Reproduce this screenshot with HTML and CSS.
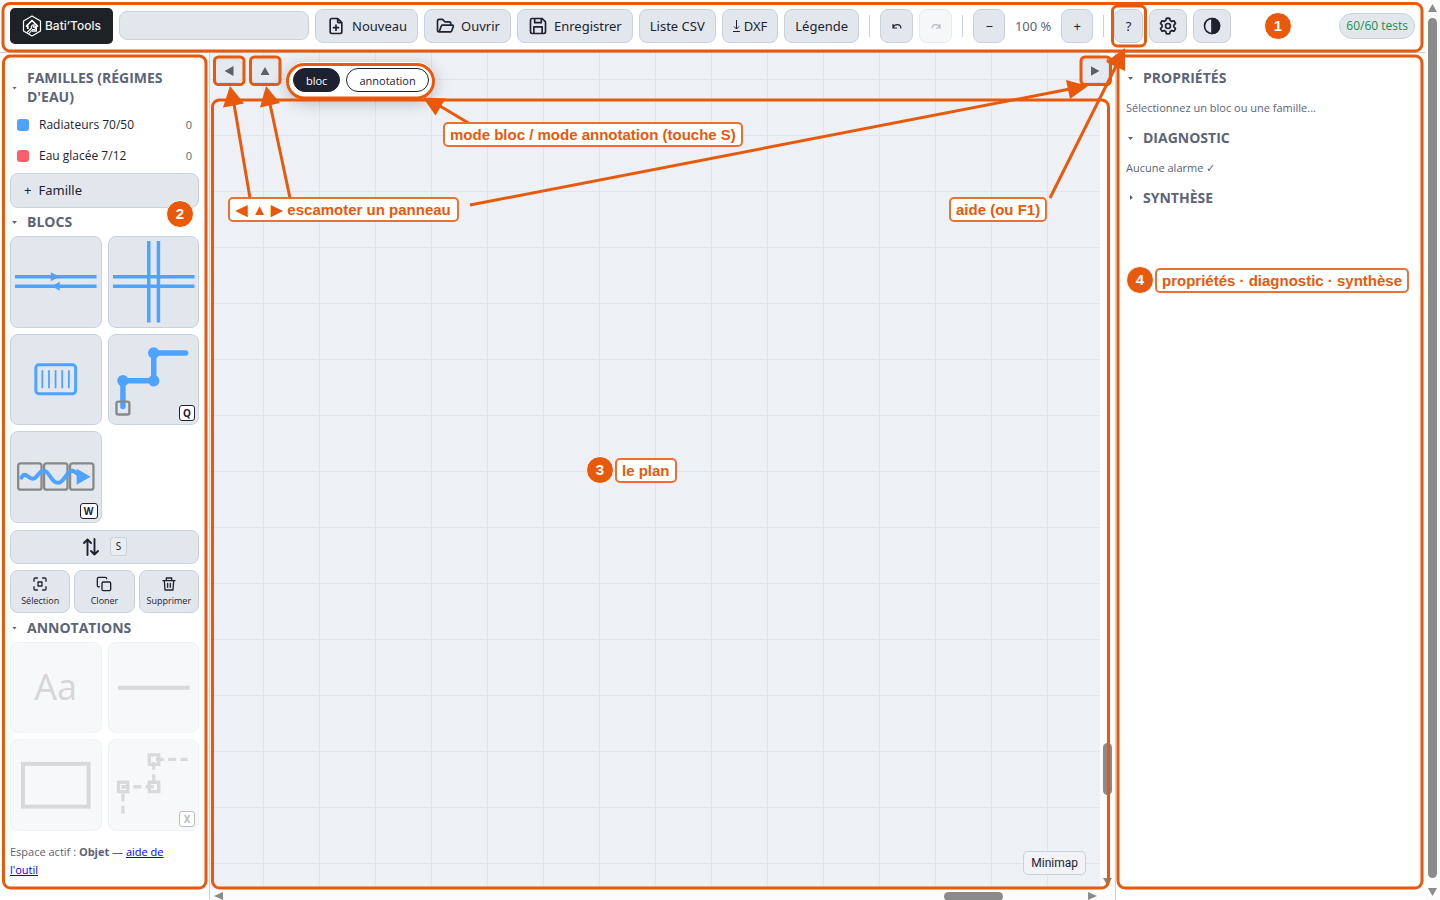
FILE: index.html
```html
<!DOCTYPE html>
<html lang="fr">
<head>
<meta charset="utf-8">
<title>Bati'Tools</title>
<link rel="stylesheet" href="styles.css">
</head>
<body>
<div class="page">
  <div class="app">
    <header class="topbar">
      <div class="logo">
        <svg width="20" height="22" viewBox="0 0 20 22" fill="none" stroke="#fff" stroke-width="1.2" stroke-linejoin="round"><path d="M10 1l8.500 5v10L10 21l-8.500-5V6z"/><path d="M4 11.500L10 5.500l6 6M5.800 10.500V14M14.200 10.500V16H10" stroke-width="1.700"/><path d="M5 17.500l4.500-4.500a2.300 2.300 0 0 1 3-3l-1.300 1.500 1 1 1.500-1.200a2.300 2.300 0 0 1-3 3L6.500 19" stroke-width="1.100"/></svg>
        <span>Bati’Tools</span>
      </div>
      <input class="project" type="text" aria-label="Nom du projet">
      <button class="btn wide"><svg class="ic" viewBox="0 0 24 24"><path d="M14 3v4a1 1 0 0 0 1 1h4M17 21H7a2 2 0 0 1-2-2V5a2 2 0 0 1 2-2h7l5 5v11a2 2 0 0 1-2 2zM12 11v6M9 14h6"/></svg>Nouveau</button>
      <button class="btn wide"><svg class="ic" viewBox="0 0 24 24"><path d="M5 19l2.800-7.500a1 1 0 0 1 .9-.5H21a1 1 0 0 1 1 1.300l-2 5.700a1.500 1.500 0 0 1-1.400 1zM5 19a2 2 0 0 1-2-2V6a2 2 0 0 1 2-2h4l3 3h5a2 2 0 0 1 2 2v2"/></svg>Ouvrir</button>
      <button class="btn wide"><svg class="ic" viewBox="0 0 24 24"><path d="M5 3h12l4 4v12a2 2 0 0 1-2 2H5a2 2 0 0 1-2-2V5a2 2 0 0 1 2-2zM8 3v5h8V3M7 21v-8h10v8"/></svg>Enregistrer</button>
      <button class="btn">Liste CSV</button>
      <button class="btn"><svg class="down" width="7" height="14" viewBox="0 0 7 14" fill="none" stroke="currentColor"><path d="M3.500 1v9M1 7.500L3.500 10 6 7.500M0 12.500h7"/></svg>DXF</button>
      <button class="btn">Légende</button>
      <span class="sep"></span>
      <button class="btn small" aria-label="Annuler"><svg width="12" height="12" viewBox="0 0 12 12" fill="none" stroke="currentColor" stroke-width="1.200"><path d="M2 4v4h4M2.200 7.500C3.500 4 9.500 3 10 8.500"/></svg></button>
      <button class="btn small off" disabled aria-label="Rétablir"><svg width="12" height="12" viewBox="0 0 12 12" fill="none" stroke="currentColor" stroke-width="1.200"><path d="M10 4v4H6M9.800 7.500C8.500 4 2.500 3 2 8.500"/></svg></button>
      <span class="sep"></span>
      <button class="btn tiny">−</button>
      <span class="zoom">100 %</span>
      <button class="btn tiny">+</button>
      <span class="sep"></span>
      <button class="btn help">?</button>
      <button class="btn square" aria-label="Réglages"><svg class="ic" viewBox="0 0 24 24"><path d="M12 2.500l2 .3.700 2.700 1.800 1 2.700-.8 1.800 3.200-1.900 2v2.200l1.900 2-1.800 3.200-2.700-.8-1.800 1-.7 2.700-2 .3-2-.3-.7-2.700-1.800-1-2.700.8L3 15.100l1.900-2v-2.200L3 8.900l1.800-3.200 2.700.8 1.800-1 .7-2.700z"/><circle cx="12" cy="12" r="3"/></svg></button>
      <button class="btn square" aria-label="Thème"><svg class="ic" viewBox="0 0 24 24"><circle cx="12" cy="12" r="9"/><path d="M12 3a9 9 0 0 1 0 18z" fill="currentColor"/></svg></button>
      <span class="tests">60/60 tests</span>
    </header>
    <main class="body">
      <aside class="left">
        <h2 class="head"><i class="mark"></i>Familles (régimes d'eau)</h2>
        <div class="fam"><i class="dot blue"></i><span>Radiateurs 70/50</span><small>0</small></div>
        <div class="fam"><i class="dot red"></i><span>Eau glacée 7/12</span><small>0</small></div>
        <button class="btn add"><span>+</span>Famille</button>
        <h2 class="head"><i class="mark"></i>Blocs</h2>
        <div class="tiles">
          <button class="tile" aria-label="Tuyaux"><svg viewBox="0 0 92 92" fill="#4da3ff" stroke="#4da3ff"><path d="M5 41h82M5 50.500h82" stroke-width="3.400"/><path d="M41 36.500l9 4.500-9 4.500zM50 46l-8 4.500 8 4.500z" stroke="none"/></svg></button>
          <button class="tile" aria-label="Croisement"><svg viewBox="0 0 92 92" stroke="#4da3ff" stroke-width="3.500"><path d="M5 41h82M5 50.500h82M41 5v82M50.700 5v82"/></svg></button>
          <button class="tile" aria-label="Radiateur"><svg viewBox="0 0 92 92" fill="none" stroke="#4da3ff"><rect x="26" y="31" width="40" height="29" rx="3" stroke-width="3"/><path d="M32.500 36.500v18M39.200 36.500v18M45.800 36.500v18M52.500 36.500v18M59.200 36.500v18" stroke-width="1.800"/></svg></button>
          <button class="tile" aria-label="Tracé"><svg viewBox="0 0 92 92" fill="none" stroke="#4da3ff"><path d="M15 73V47h31V19h32" stroke-width="5.500" stroke-linecap="round"/><g fill="#4da3ff" stroke="none"><circle cx="15" cy="47" r="5.700"/><circle cx="46" cy="47" r="5.700"/><circle cx="46" cy="19" r="5.700"/></g><rect x="8.500" y="68" width="13" height="13" rx="2" stroke="#888" stroke-width="2.400"/></svg><kbd>Q</kbd></button>
          <button class="tile" aria-label="Parcours"><svg viewBox="0 0 92 92" fill="none" stroke="#888" stroke-width="2.300"><rect x="8.200" y="32.500" width="23.500" height="26.500" rx="2.500"/><rect x="34.300" y="32.500" width="23.500" height="26.500" rx="2.500"/><rect x="60.400" y="32.500" width="23.500" height="26.500" rx="2.500"/><path d="M11.500 47c4-9 8 5 14 0 4-4 6-9 11-6 5 4 6 12 13 11 6-2 8-13 14-12l6 4" stroke="#4da3ff" stroke-width="4" stroke-linecap="round"/><path d="M67 38l14 8-14 8z" fill="#4da3ff" stroke="none"/></svg><kbd>W</kbd></button>
        </div>
        <button class="btn swap" aria-label="Inverser"><svg width="18" height="18" viewBox="0 0 18 18" fill="none" stroke="currentColor" stroke-width="1.900" stroke-linecap="round" stroke-linejoin="round"><path d="M5.500 17V1.500M2 5l3.500-3.500L9 5M12.500 1v15.500M16 13l-3.500 3.500L9 13"/></svg><kbd>S</kbd></button>
        <div class="trio">
          <button class="btn act"><svg class="ic mini" viewBox="0 0 24 24"><path d="M3 8V5a2 2 0 0 1 2-2h3M16 3h3a2 2 0 0 1 2 2v3M21 16v3a2 2 0 0 1-2 2h-3M8 21H5a2 2 0 0 1-2-2v-3M9 9h6v6H9z"/></svg>Sélection</button>
          <button class="btn act"><svg class="ic mini" viewBox="0 0 24 24"><rect x="9" y="9" width="13" height="13" rx="2"/><path d="M5 16a2 2 0 0 1-3-2V4a2 2 0 0 1 2-2h10a2 2 0 0 1 2 2"/></svg>Cloner</button>
          <button class="btn act"><svg class="ic mini" viewBox="0 0 24 24"><path d="M3 7h18M8 7V3h8v4M5 7l1 14h12l1-14M10 11v6M14 11v6"/></svg>Supprimer</button>
        </div>
        <h2 class="head"><i class="mark"></i>Annotations</h2>
        <div class="tiles">
          <button class="tile off" disabled>Aa</button>
          <button class="tile off" disabled aria-label="Ligne"><svg viewBox="0 0 92 92" stroke="#d8d9da" stroke-width="4"><path d="M10 46h72"/></svg></button>
          <button class="tile off" disabled aria-label="Rectangle"><svg viewBox="0 0 92 92" fill="none" stroke="#d8d9da" stroke-width="4"><rect x="13" y="25" width="66" height="43"/></svg></button>
          <button class="tile off" disabled aria-label="Polyligne"><svg viewBox="0 0 92 92" fill="none" stroke="#d8d9da" stroke-width="3.300"><path d="M15 75V48h31V20.500h34" stroke-dasharray="8 4.500"/><path d="M10.500 43.500h9.500v9.500h-9.500zM41.500 43.500h9.500v9.500h-9.500zM41.500 16h9.500v9.500h-9.500z"/></svg><kbd>X</kbd></button>
        </div>
        <p class="foot">Espace actif : <b>Objet</b> — <a href="#">aide de l'outil</a></p>
      </aside>
      <section class="center">
        <div class="view">
          <div class="plan">
            <div class="tools">
              <button class="fold" aria-label="Panneau gauche"><i class="tri l"></i></button>
              <button class="fold" aria-label="Barre du haut"><i class="tri u"></i></button>
              <div class="modes"><button class="mode on">bloc</button><button class="mode">annotation</button></div>
            </div>
            <button class="minimap">Minimap</button>
          </div>
          <div class="vbar"><i class="tri u"></i><i class="thumb"></i><i class="tri d"></i></div>
          <button class="fold last" aria-label="Panneau droit"><i class="tri r"></i></button>
        </div>
        <div class="hbar"><i class="tri l"></i><i class="thumb"></i><i class="tri r"></i></div>
      </section>
      <aside class="right">
        <h2 class="head"><i class="mark"></i>Propriétés</h2>
        <p>Sélectionnez un bloc ou une famille...</p>
        <h2 class="head"><i class="mark"></i>Diagnostic</h2>
        <p>Aucune alarme ✓</p>
        <h2 class="head"><i class="mark shut"></i>Synthèse</h2>
      </aside>
    </main>
  </div>
  <div class="pagebar"><i class="tri u"></i><i class="thumb"></i><i class="tri d"></i></div>
</div>
<div class="guide">
  <svg width="1440" height="900" fill="none" stroke="#e8590c" stroke-width="3">
    <rect x="3" y="3.500" width="1419" height="47.500" rx="7"/>
    <rect x="3.500" y="56" width="202.500" height="832" rx="7"/>
    <rect x="212.500" y="100" width="896" height="788" rx="7"/>
    <rect x="1118" y="56" width="304" height="832" rx="7"/>
    <rect x="214.500" y="57" width="29.500" height="27.500" rx="4"/>
    <rect x="250.500" y="57" width="29.500" height="27.500" rx="4"/>
    <rect x="1081" y="57" width="29.500" height="27.500" rx="4"/>
    <rect x="287.500" y="64.500" width="146" height="33.500" rx="17"/>
    <rect x="1112.500" y="6" width="33" height="40" rx="5"/>
    <path d="M250 198L234 104M290 198L270 104M470 124L440 106M470 205L1070 89M1050 198L1116 66"/>
    <g fill="#e8590c" stroke="none"><path d="M230 86l-7 21.500 21-4zM266 86l-6 21.500 20-4.500zM423 97.500l22.500 1-10 17zM1088 86l-22-6 4 19zM1125 48l-19 14 19 9z"/></g>
  </svg>
  <span class="num n1">1</span><span class="num n2">2</span><span class="num n3">3</span><span class="num n4">4</span>
  <span class="tag t1">mode bloc / mode annotation (touche S)</span>
  <span class="tag t2">◀ ▲ ▶ escamoter un panneau</span>
  <span class="tag t3">aide (ou F1)</span>
  <span class="tag t4">le plan</span>
  <span class="tag t5">propriétés · diagnostic · synthèse</span>
</div>
</body>
</html>
```
FILE: styles.css
```css
* { box-sizing: border-box; }
body { margin: 0; overflow: hidden; font: 12px/18px "Open Sans", "Noto Sans", sans-serif; color: #1e2230; background: #fff; }
button, input { font: inherit; color: inherit; margin: 0; }
h2, p { margin: 0; }
.page { display: flex; height: 100vh; }
.app { flex: 1; min-width: 0; display: flex; flex-direction: column; }

.topbar { display: flex; align-items: center; gap: 6px; height: 53px; flex: none; padding: 0 10px 1px; border-bottom: 1px solid #c9cfda; }
.logo { display: flex; align-items: center; justify-content: center; gap: 3px; width: 103px; height: 36px; border-radius: 5px; background: #1c2226; color: #f2f2f2; font: 500 12px/18px Inter, sans-serif; flex: none; }
.project { width: 190px; height: 29px; border: 1px solid #c9d1dc; border-radius: 8px; background: #e2e7ee; }
.btn { display: flex; align-items: center; justify-content: center; height: 34px; padding: 0 10px; border: 1px solid #c9d1dc; border-radius: 8px; background: #e2e7ee; font: 13px/18px "Noto Sans", sans-serif; white-space: nowrap; flex: none; }
.btn.wide { gap: 6px; padding: 0 10px; }
.btn.small { width: 33px; padding: 0; }
.btn.tiny { width: 32px; padding: 0; }
.btn.help { width: 29px; padding: 0; }
.btn.square { width: 38px; padding: 0; }
.btn.off { background: #f5f7f9; border-color: #e6e9ee; color: #b6b9bf; }
.ic { width: 20px; height: 20px; fill: none; stroke: currentColor; stroke-width: 2; stroke-linecap: round; stroke-linejoin: round; }
.ic.mini { width: 16px; height: 16px; }
.down { margin-right: 4px; }
.sep { width: 1px; height: 22px; margin: 0 4px; background: #c9d1dc; }
.zoom { min-width: 44px; text-align: center; color: #5b6478; font: 13px/18px "Noto Sans", sans-serif; }
.tests { margin-left: auto; height: 26px; padding: 3px 6px; border: 1px solid #c9d1dc; border-radius: 13px; background: #e2e7ee; color: #1f8a4c; font-size: 12px; }

.body { flex: 1; min-height: 0; display: flex; }
.left { width: 210px; flex: none; padding: 15px 10px 0; border-right: 1px solid #c9d1dc; overflow: hidden; }
.right { width: 310px; flex: none; padding: 15px 10px 0; border-left: 1px solid #c9d1dc; }
.head { display: flex; align-items: center; gap: 8px; font-size: 14px; line-height: 19px; font-weight: 700; text-transform: uppercase; color: #5b6478; }
.mark { flex: none; width: 5px; height: 3px; margin: 2px 2px 0; background: currentColor; clip-path: polygon(0 0, 100% 0, 50% 100%); }
.mark.shut { width: 3px; height: 5px; margin: 0 2px 0 4px; clip-path: polygon(0 0, 100% 50%, 0 100%); }
.fam { display: flex; align-items: center; height: 31px; padding: 0 7px; gap: 10px; }
.head + .fam { margin-top: 3px; }
.fam small { margin-left: auto; font-size: 11px; color: #5b6478; }
.dot { width: 12px; height: 12px; border-radius: 3px; }
.dot.blue { background: #4da3ff; }
.dot.red { background: #ff5d6c; }
.add { width: 100%; height: 35px; justify-content: flex-start; gap: 7px; padding: 0 13px 2px; margin: 2px 0 4px; }
.tiles { display: grid; grid-template-columns: 1fr 1fr; gap: 6px; margin: 5px 0 7px; }
.tile { position: relative; display: flex; align-items: center; justify-content: center; aspect-ratio: 1; padding: 0; border: 1px solid #c9d1dc; border-radius: 8px; background: #e2e7ee; }
.tile svg { flex: none; width: calc(100% + 2px); height: calc(100% + 2px); margin: -1px; }
.tile.off { background: #f7f8fa; border-color: #eff1f4; color: #d5d6d7; font-size: 36px; }
.tile kbd { position: absolute; right: 3px; bottom: 3px; height: 16px; min-width: 16px; padding: 0 3px; border: 1px solid #1e2230; border-radius: 3px; background: #fff; font: 700 10px/14px "Noto Sans", sans-serif; }
.tile.off kbd { color: #bcbdc1; border-color: #bcbdc1; }
.swap { width: 100%; gap: 10px; margin-bottom: 6px; }
.swap kbd { width: 17px; height: 19px; border: 1px solid #c9d1dc; border-radius: 3px; background: #e9edf2; font: 10px/16px "Noto Sans", sans-serif; }
.trio { display: grid; grid-template-columns: repeat(3, 1fr); gap: 4px; margin-bottom: 5px; }
.act { flex-direction: column; height: 43px; padding: 2px 0 0; gap: 2px; font: 9px/14px "Open Sans", sans-serif; }
.foot { padding: 5px 24px 0 0; font-size: 11px; line-height: 18px; color: #5b6478; }
.foot a { color: #0000ee; }
.right p { margin: 10px 0 9px; padding: 2px 0; font-size: 11px; color: #5b6478; }

.center { flex: 1; min-width: 0; display: flex; flex-direction: column; }
.view { position: relative; flex: 1; display: flex; min-height: 0; }
.plan { position: relative; flex: 1; background: linear-gradient(#e1e5ea 1px, transparent 1px) 0 26px / 56px 56px, linear-gradient(90deg, #e1e5ea 1px, transparent 1px) 53px 0 / 56px 56px, #edf0f5; }
.tools { display: flex; align-items: flex-start; gap: 8px; padding: 6px 5px; }
.fold { display: flex; align-items: center; justify-content: center; width: 28px; height: 24px; padding: 0; border: 1px solid #d6dce5; border-radius: 6px; background: #e5e9f0; color: #5b616b; }
.last { position: absolute; right: 6px; top: 6px; }
.modes { display: flex; gap: 6px; padding: 6px; margin-top: 3px; border-radius: 20px; background: #fff; box-shadow: 0 4px 16px #00000040; }
.mode { height: 24px; padding: 1px 12px 0; border: 1px solid #1e2230; border-radius: 12px; background: #fff; font-size: 11px; line-height: 20px; }
.mode.on { background: #1e2230; color: #fff; }
.minimap { position: absolute; right: 14px; bottom: 13px; height: 24px; padding: 0 7px; border: 1px solid #c9d1dc; border-radius: 5px; background: #f1f3f7; font: 12px/18px Roboto, sans-serif; }
.tri { width: 9px; height: 8px; background: #8b8b8b; flex: none; }
.fold .tri { background: currentColor; }
.fold .tri.l, .fold .tri.r { height: 10px; }
.tri.u { clip-path: polygon(50% 0, 100% 100%, 0 100%); }
.tri.d { clip-path: polygon(0 0, 100% 0, 50% 100%); }
.tri.l { clip-path: polygon(100% 0, 100% 100%, 0 50%); }
.tri.r { clip-path: polygon(0 0, 100% 50%, 0 100%); }
.thumb { background: #8b8b8b; border-radius: 5px; flex: none; }
.vbar { width: 15px; display: flex; flex-direction: column; align-items: center; padding: 5px 0 2px; background: #fcfcfc; }
.vbar .thumb { width: 9px; height: 52px; margin: auto 0 83px; }
.hbar { height: 12px; flex: none; display: flex; padding: 4px 18px 0 4px; overflow: hidden; background: #fcfcfc; }
.hbar .thumb { width: 59px; height: 9px; margin: 0 85px 0 auto; }
.pagebar { width: 15px; display: flex; flex-direction: column; align-items: center; gap: 6px; padding: 4px 0; background: #fcfcfc; }
.pagebar .thumb { width: 9px; flex: 1; margin-bottom: 4px; }

.guide { position: absolute; left: 0; top: 0; width: 1440px; height: 900px; pointer-events: none; color: #e8590c; }
.guide svg { display: block; }
.num { position: absolute; width: 28px; height: 28px; border: 1px solid #fff; border-radius: 14px; background: #e8590c; color: #fff; font: 700 15px/26px "Liberation Sans", Arial, sans-serif; text-align: center; }
.n1 { left: 1264px; top: 12px; }
.n2 { left: 166px; top: 200px; }
.n3 { left: 586px; top: 456px; }
.n4 { left: 1126px; top: 266px; }
.tag { position: absolute; height: 25px; padding: 0 5px; border: 2px solid #eb7132; border-radius: 5px; background: #fff; font: 700 15px/22px "Liberation Sans", Arial, sans-serif; white-space: nowrap; }
.t1 { left: 443px; top: 122px; }
.t2 { left: 228px; top: 197px; padding: 0 6px; }
.t3 { left: 949px; top: 197px; }
.t4 { left: 615px; top: 458px; }
.t5 { left: 1155px; top: 268px; }
```
